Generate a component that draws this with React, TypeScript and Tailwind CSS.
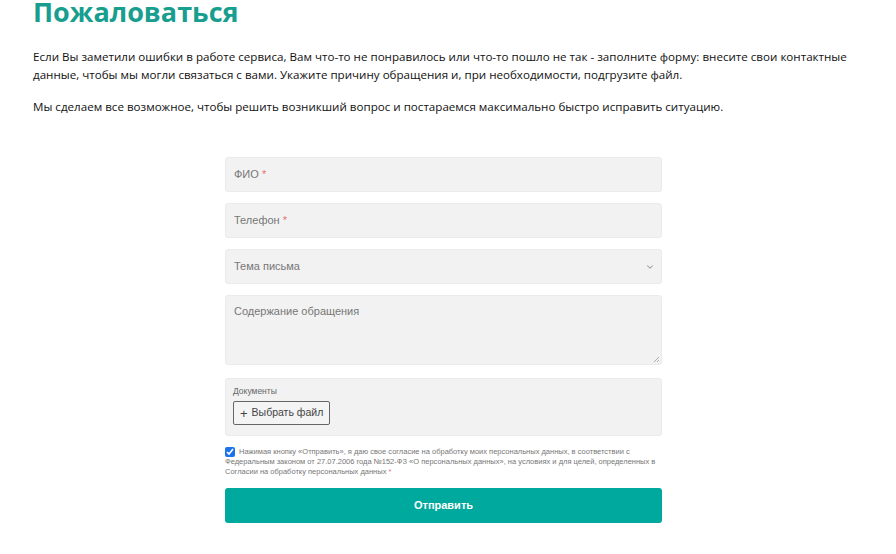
import { ChevronDown } from 'lucide-react'

const sans = { fontFamily: '"Open Sans", "Noto Sans", sans-serif' }
const arial = { fontFamily: '"Liberation Sans", Arial, sans-serif' }

function Field({ label, required }: { label: string; required?: boolean }) {
  return (
    <div className="h-[35px] rounded-[3px] border border-[#ebebeb] bg-[#f2f2f2] px-[8px] flex items-center">
      <span className="text-[11px] text-[#777]">
        {label}
        {required && <span className="text-[#e57373]"> *</span>}
      </span>
    </div>
  )
}

export default function App() {
  return (
    <div className="min-h-[554px] bg-white text-black overflow-hidden" style={sans}>
      <div className="pl-[33px] pr-[40px]">
        <h1 className="-mt-[8px] text-[27px] font-bold leading-[40px] text-[#179e8e]">
          Пожаловаться
        </h1>
        <div className="mt-[16px] w-[830px] text-[11.6px] leading-[18px] text-[#111]">
          <p>
            Если Вы заметили ошибки в работе сервиса, Вам что-то не понравилось или что-то пошло не так - заполните форму:
            внесите свои контактные данные, чтобы мы могли связаться с вами. Укажите причину обращения и, при необходимости,
            подгрузите файл.
          </p>
          <p className="mt-[14px]">
            Мы сделаем все возможное, чтобы решить возникший вопрос и постараемся максимально быстро исправить ситуацию.
          </p>
        </div>
      </div>

      <form className="ml-[225px] mt-[41px] w-[437px] flex flex-col gap-[11px]" style={arial}>
        <Field label="ФИО" required />
        <Field label="Телефон" required />
        <div className="h-[35px] rounded-[3px] border border-[#ebebeb] bg-[#f2f2f2] pl-[8px] pr-[6px] flex items-center justify-between">
          <span className="text-[11px] text-[#777]">Тема письма</span>
          <ChevronDown className="w-[10px] h-[10px] text-[#999]" strokeWidth={2.5} />
        </div>
        <div className="relative h-[70px] rounded-[3px] border border-[#ebebeb] bg-[#f2f2f2] px-[8px] pt-[8px] text-[11px] leading-[14px] text-[#777]">
          Содержание обращения
          <svg className="absolute right-[1px] bottom-[1px]" width="7" height="7" viewBox="0 0 7 7">
            <path d="M6 1 L1 6 M6 4 L4 6" stroke="#999" strokeWidth="0.8" />
          </svg>
        </div>
        <div className="mt-[2px] h-[58px] rounded-[3px] border border-[#ebebeb] bg-[#f2f2f2] px-[7px] pt-[6px]">
          <div className="text-[8.5px] leading-[12px] text-[#666]">Документы</div>
          <button
            type="button"
            className="mt-[4px] h-[24px] px-[6px] flex items-center gap-[4px] rounded-[2px] border border-[#666] bg-[#f4f4f4] text-[10.5px] text-[#444]"
          >
            <span className="text-[13px] leading-none font-light">+</span>
            Выбрать файл
          </button>
        </div>
        <p className="text-[7.5px] leading-[10px] text-[#777]">
          <input type="checkbox" defaultChecked className="float-left mr-[4px] mt-[0px] w-[10px] h-[10px] accent-[#1a73e8]" />
          Нажимая кнопку «Отправить», я даю свое согласие на обработку моих персональных данных, в соответствии с
          Федеральным законом от 27.07.2006 года №152-ФЗ «О персональных данных», на условиях и для целей, определенных в
          Согласии на обработку персональных данных <span className="text-[#e57373]">*</span>
        </p>
        <button
          type="button"
          className="h-[35px] rounded-[3px] bg-[#00a99d] text-white text-[11px] font-bold"
        >
          Отправить
        </button>
      </form>
    </div>
  )
}
